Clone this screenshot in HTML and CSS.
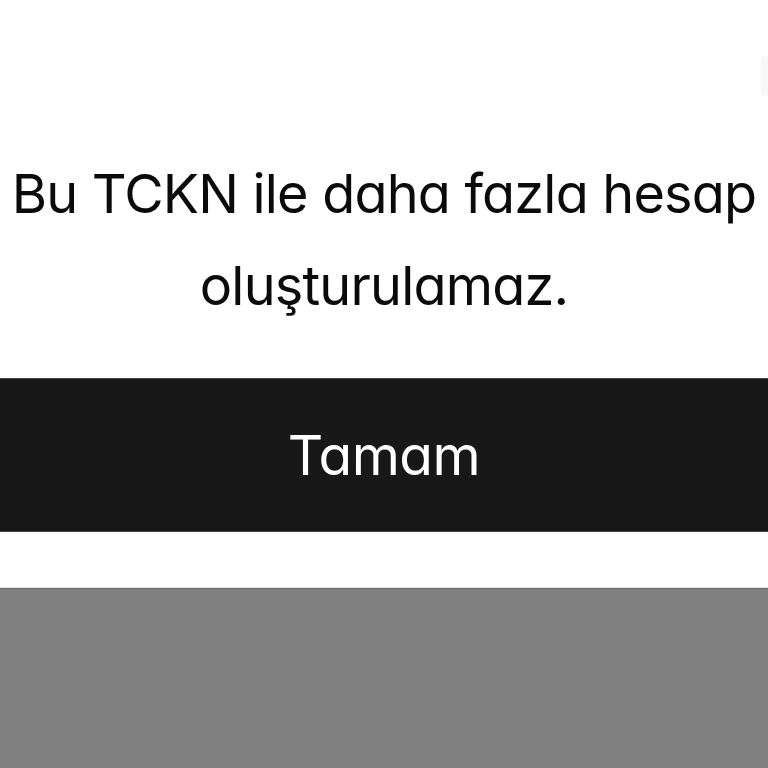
FILE: index.html
```html
<!DOCTYPE html>
<html lang="tr">
<head>
<meta charset="utf-8">
<link rel="stylesheet" href="styles.css">
</head>
<body>
<div class="dialog">
  <div class="edge"></div>
  <p class="message">Bu TCKN ile daha fazla hesap<br>oluşturulamaz.</p>
  <button class="button">Tamam</button>
</div>
<div class="overlay"></div>
</body>
</html>
```
FILE: styles.css
```css
html, body {
  margin: 0;
  padding: 0;
  width: 768px;
  height: 768px;
  overflow: hidden;
  background: #808080;
}
body {
  display: flex;
  flex-direction: column;
  font-family: Inter, "Noto Sans", sans-serif;
  font-feature-settings: "cv11" 1;
}
.dialog {
  position: relative;
  background: #fff;
  height: 588px;
  display: flex;
  flex-direction: column;
  border-bottom: 1px solid #e6e6e6;
  box-sizing: border-box;
}
.edge {
  position: absolute;
  right: 0;
  top: 56px;
  width: 7px;
  height: 40px;
  background: #f8f8f8;
  border-radius: 4px 0 0 4px;
}
.message {
  margin: 148px 0 0;
  font-size: 54px;
  line-height: 92px;
  text-align: center;
  color: #0a0a0a;
  letter-spacing: -0.8px;
}
.button {
  margin-top: auto;
  margin-bottom: 55px;
  height: 154px;
  border: 0;
  border-top: 1px solid #444;
  border-bottom: 1px solid #444;
  background: #181818;
  color: #fff;
  font-family: inherit;
  font-feature-settings: inherit;
  font-size: 55px;
  letter-spacing: -0.5px;
  padding: 0;
}
.overlay {
  flex: 1;
  background: #808080;
  border-top: 1px solid #707070;
}
```
